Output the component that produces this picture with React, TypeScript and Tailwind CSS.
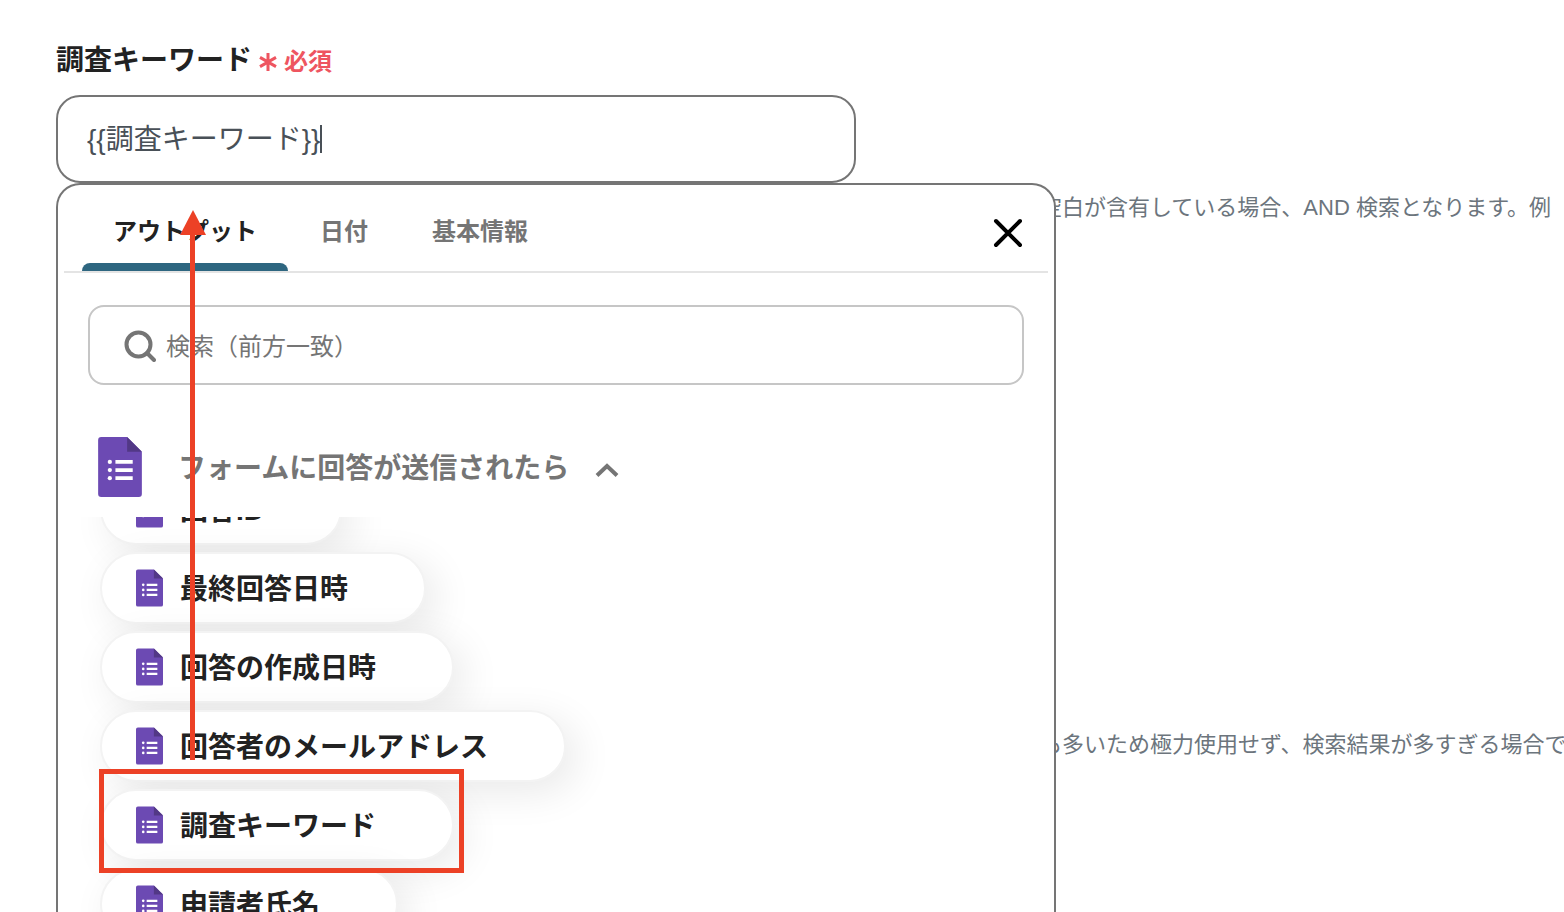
import { useState } from "react";

const tabs = [
  { label: "アウトプット", width: "w-[206px]" },
  { label: "日付", width: "w-28" },
  { label: "基本情報", width: "w-40" },
];

const outputs = [
  "回答ID",
  "最終回答日時",
  "回答の作成日時",
  "回答者のメールアドレス",
  "調査キーワード",
  "申請者氏名",
];

function FormsIcon({ className }: { className: string }) {
  return (
    <svg viewBox="0 0 43 59" className={className} aria-hidden="true">
      <path
        d="M3 0H28.500L43 14.500V56a3 3 0 0 1-3 3H3a3 3 0 0 1-3-3V3a3 3 0 0 1 3-3Z"
        fill="#6c4ab3"
      />
      <path d="M28.500 0 43 14.500H28.500Z" fill="#523886" />
      <g fill="#fff">
        <circle cx="11.500" cy="24.500" r="2.100" />
        <circle cx="11.500" cy="32.500" r="2.100" />
        <circle cx="11.500" cy="40.500" r="2.100" />
        <path d="M17 22.700h17v3.600H17zM17 30.700h17v3.600H17zM17 38.700h17v3.600H17z" />
      </g>
    </svg>
  );
}

function RequiredMark() {
  return (
    <svg viewBox="0 0 18 20" className="h-5 w-[18px]" aria-hidden="true">
      <path
        d="M9 1v18M1 5.400l16 9.200M17 5.400l-16 9.200"
        stroke="#ee5560"
        strokeWidth="3"
        fill="none"
      />
    </svg>
  );
}

function OutputChip({ label }: { label: string }) {
  return (
    <li>
      <button
        type="button"
        className="flex h-[72px] items-center gap-[17px] rounded-full border-2 border-[#f3f3f3] bg-white pr-[76px] pl-[34px] text-[28px] leading-10 font-bold whitespace-nowrap text-[#222] shadow-[10px_10px_40px_rgba(0,0,0,0.09)]"
      >
        <FormsIcon className="h-[38px] w-[27px] shrink-0" />
        <span className="pt-1">{label}</span>
      </button>
    </li>
  );
}

function OutputPicker() {
  const [active, setActive] = useState(0);

  return (
    <section className="z-10 flex min-h-0 flex-col overflow-hidden rounded-t-3xl border-2 border-b-0 border-[#757575] bg-white">
      <div className="mx-1.5 flex h-[88px] shrink-0 border-b-2 border-[#e4e4e4] pl-[18px]">
        <div role="tablist" className="flex">
          {tabs.map((tab, i) => (
            <button
              key={tab.label}
              type="button"
              role="tab"
              aria-selected={i === active}
              onClick={() => setActive(i)}
              className={`${tab.width} flex flex-col pt-4 text-2xl font-bold ${
                i === active ? "text-[#222]" : "text-[#757575]"
              }`}
            >
              <span className="flex flex-1 items-center justify-center self-stretch whitespace-nowrap">
                {tab.label}
              </span>
              <span
                className={`h-2 self-stretch rounded-t-lg ${
                  i === active ? "bg-[#2e6680]" : "bg-transparent"
                }`}
              />
            </button>
          ))}
        </div>
        <button type="button" aria-label="閉じる" className="mt-2.5 mr-6 ml-auto self-center">
          <svg viewBox="0 0 32 32" className="size-8" aria-hidden="true">
            <path
              d="M4 4l24 24M28 4L4 28"
              stroke="#000"
              strokeWidth="4"
              strokeLinecap="round"
            />
          </svg>
        </button>
      </div>

      <label className="mx-[30px] mt-8 flex h-20 shrink-0 items-center gap-2.5 rounded-2xl border-2 border-[#c6c6c6] pt-0.5 pl-[34px]">
        <svg viewBox="0 0 32 32" className="size-8 shrink-0" aria-hidden="true">
          <g fill="none" stroke="#757575" strokeWidth="4" strokeLinecap="round">
            <circle cx="14.500" cy="14.500" r="12" />
            <path d="M23 23l7 7" />
          </g>
        </svg>
        <input
          type="text"
          aria-label="検索"
          placeholder="検索（前方一致）"
          className="min-w-0 flex-1 bg-transparent pt-0.5 pr-6 text-2xl outline-none placeholder:text-[#757575]"
        />
      </label>

      <button
        type="button"
        aria-expanded="true"
        className="mt-8 flex h-[100px] shrink-0 items-center pl-10 text-[28px] leading-10 font-bold text-[#757575]"
      >
        <FormsIcon className="mr-9 h-[60px] w-11" />
        <span className="pt-1">フォームに回答が送信されたら</span>
        <svg viewBox="0 0 24 16" className="mt-1.5 ml-[26px] h-4 w-6" aria-hidden="true">
          <path d="M2 13.500 12 4l10 9.500" fill="none" stroke="#757575" strokeWidth="4" />
        </svg>
      </button>

      <div className="min-h-0 flex-1 overflow-hidden">
        <ul className="-mt-11 flex flex-col items-start gap-[7px] pl-[42px]">
          {outputs.map((label) => (
            <OutputChip key={label} label={label} />
          ))}
        </ul>
      </div>
    </section>
  );
}

// Red guide: drag the value from the list up to the field
function Guide() {
  return (
    <svg
      className="pointer-events-none absolute top-0 left-0 z-20 h-[912px] w-[500px]"
      viewBox="0 0 500 912"
      aria-hidden="true"
    >
      <path d="M190 234h5v526h-5z" fill="#ec4126" />
      <path d="M193 210l13 25h-26z" fill="#ec4126" />
      <rect x="101.500" y="771.500" width="360" height="99" fill="none" stroke="#ec4126" strokeWidth="5" />
    </svg>
  );
}

export default function App() {
  const [keyword, setKeyword] = useState("{{調査キーワード}}");

  return (
    <main
      lang="ja"
      className="relative flex h-screen flex-col overflow-hidden bg-white pt-9 pl-14 font-['Liberation_Sans','Noto_Sans_CJK_JP',sans-serif]"
    >
      <label htmlFor="keyword" className="mb-3 flex h-[47px] shrink-0 items-center">
        <span className="pt-0.5 text-[28px] leading-10 font-bold text-[#222]">調査キーワード</span>
        <span className="mt-1 ml-[7px] flex items-center gap-[7px] text-2xl font-bold text-[#ee5560]">
          <RequiredMark />
          必須
        </span>
      </label>

      <div className="flex h-[88px] w-full max-w-[800px] shrink-0 items-center rounded-3xl border-2 border-[#757575] pl-[29px]">
        <input
          id="keyword"
          type="text"
          value={keyword}
          onChange={(e) => setKeyword(e.target.value)}
          className="field-sizing-content max-w-full bg-transparent pt-0.5 text-[28px] leading-10 text-[#495057] outline-none"
        />
        <span className="h-7 w-0.5 bg-[#495057]" />
      </div>

      <div className="grid min-h-0 flex-1 grid-cols-[minmax(0,1000px)_minmax(0,1fr)] grid-rows-[minmax(0,1fr)]">
        <OutputPicker />
        <div className="-ml-4 overflow-hidden pt-[9px] text-[22px] leading-8 whitespace-nowrap text-[#6c757d]">
          <p>空白が含有している場合、AND 検索となります。例</p>
          <p className="mt-[505px]">も多いため極力使用せず、検索結果が多すぎる場合で</p>
        </div>
      </div>

      <Guide />
    </main>
  );
}
